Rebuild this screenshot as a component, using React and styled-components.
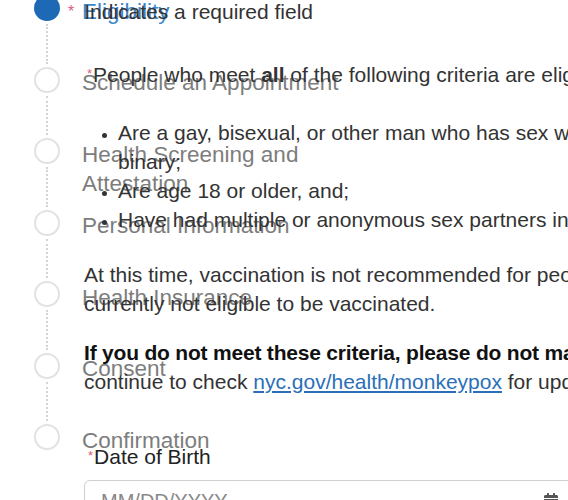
import React from "react";
import styled, { createGlobalStyle } from "styled-components";
import { FaCalendarAlt } from "react-icons/fa";

const GlobalStyle = createGlobalStyle`
  html, body {
    margin: 0;
    padding: 0;
    background: #fff;
  }
  body {
    font-family: "Liberation Sans", Arial, sans-serif;
  }
`;

const Page = styled.div`
  display: grid;
  width: 568px;
  height: 500px;
  overflow: hidden;
  background: #fff;

  & > * {
    grid-area: 1 / 1;
  }
`;

/* ---------- stepper ---------- */

const Stepper = styled.ol`
  list-style: none;
  margin: -5px 0 0;
  padding: 0 0 0 34px;
`;

const Step = styled.li`
  display: flex;
  gap: 22px;
  height: 71.5px;
`;

const Track = styled.div`
  display: flex;
  flex-direction: column;
  align-items: center;
  width: 26px;
  flex-shrink: 0;
`;

const Circle = styled.span`
  box-sizing: border-box;
  width: 26px;
  height: 26px;
  border-radius: 50%;
  flex-shrink: 0;
  background: ${({ $active }) => ($active ? "#1d69b5" : "#fff")};
  border: 2px solid ${({ $active }) => ($active ? "#1d69b5" : "#e2e2e2")};
`;

const Dots = styled.span`
  flex: 1;
  width: 0;
  margin: 3px 0;
  border-left: 2px dotted #d4d4d4;
`;

const StepLabel = styled.span`
  margin-top: 1.5px;
  width: 270px;
  font-size: 22.5px;
  line-height: 29px;
  color: ${({ $active }) => ($active ? "#3d87c9" : "#7d7d7d")};
`;

const steps = [
  "Eligibility",
  "Schedule an Appointment",
  "Health Screening and Attestation",
  "Personal Information",
  "Health Insurance",
  "Consent",
  "Confirmation",
];

/* ---------- form ---------- */

const Form = styled.div`
  padding-left: 84px;
  font-size: 21px;
  line-height: 29px;
  color: #333;
  white-space: nowrap;
`;

const Req = styled.span`
  color: #d9607a;
  font-size: ${({ $small }) => ($small ? "13px" : "16px")};
  vertical-align: ${({ $small }) => ($small ? "4px" : "2px")};
  margin-right: ${({ $small }) => ($small ? "1px" : "10px")};
`;

const Note = styled.div`
  margin: -3px 0 0 -16px;
`;

const FieldLabel = styled.div`
  margin: ${({ $top }) => $top}px 0 0 ${({ $left }) => $left ?? 4}px;
  color: ${({ $dark }) => ($dark ? "#222" : "#333")};
`;

const Criteria = styled.ul`
  margin: 29px 0 0;
  padding-left: 34px;

  li::marker {
    font-size: 16px;
  }
`;

const Para = styled.p`
  margin: ${({ $top }) => $top}px 0 0;
`;

const Strong = styled.b`
  color: #111;
  letter-spacing: -0.2px;
`;

const Link = styled.a`
  color: #2a6fb8;
  text-decoration: underline;
`;

const Input = styled.div`
  display: flex;
  align-items: flex-start;
  justify-content: space-between;
  box-sizing: border-box;
  margin-top: 9px;
  width: 490px;
  height: 44px;
  padding: 8px 14px 0 16px;
  border: 1px solid #cfcfcf;
  border-radius: 6px;
  color: #888;
  font-size: 20px;
  line-height: 24px;

  svg {
    margin-top: 4px;
    color: #555;
  }
`;

export default function App() {
  return (
    <>
      <GlobalStyle />
      <Page>
        <Stepper>
          {steps.map((s, i) => (
            <Step key={s}>
              <Track>
                <Circle $active={i === 0} />
                {i < steps.length - 1 && <Dots />}
              </Track>
              <StepLabel $active={i === 0}>{s}</StepLabel>
            </Step>
          ))}
        </Stepper>

        <Form>
          <Note>
            <Req>*</Req>Indicates a required field
          </Note>
          <FieldLabel $top={33} $left={3}>
            <Req $small>*</Req>People who meet <b>all</b> of the following
            criteria are eligible to be vaccinated:
          </FieldLabel>
          <Criteria>
            <li>
              Are a gay, bisexual, or other man who has sex with men, or are
              transgender, gender non-conforming or gender non-
              <br />
              binary;
            </li>
            <li>Are age 18 or older, and;</li>
            <li>
              Have had multiple or anonymous sex partners in the last 14 days.
            </li>
          </Criteria>
          <Para $top={26}>
            At this time, vaccination is not recommended for people who do not
            meet these criteria and you are
            <br />
            currently not eligible to be vaccinated.
          </Para>
          <Para $top={20}>
            <Strong>
              If you do not meet these criteria, please do not make an
              appointment.
            </Strong>{" "}
            Please
            <br />
            continue to check{" "}
            <Link href="#">nyc.gov/health/monkeypox</Link> for updates.
          </Para>
          <FieldLabel $top={45} $dark>
            <Req $small>*</Req>Date of Birth
          </FieldLabel>
          <Input>
            <span>MM/DD/YYYY</span>
            <FaCalendarAlt size={16} />
          </Input>
        </Form>
      </Page>
    </>
  );
}
